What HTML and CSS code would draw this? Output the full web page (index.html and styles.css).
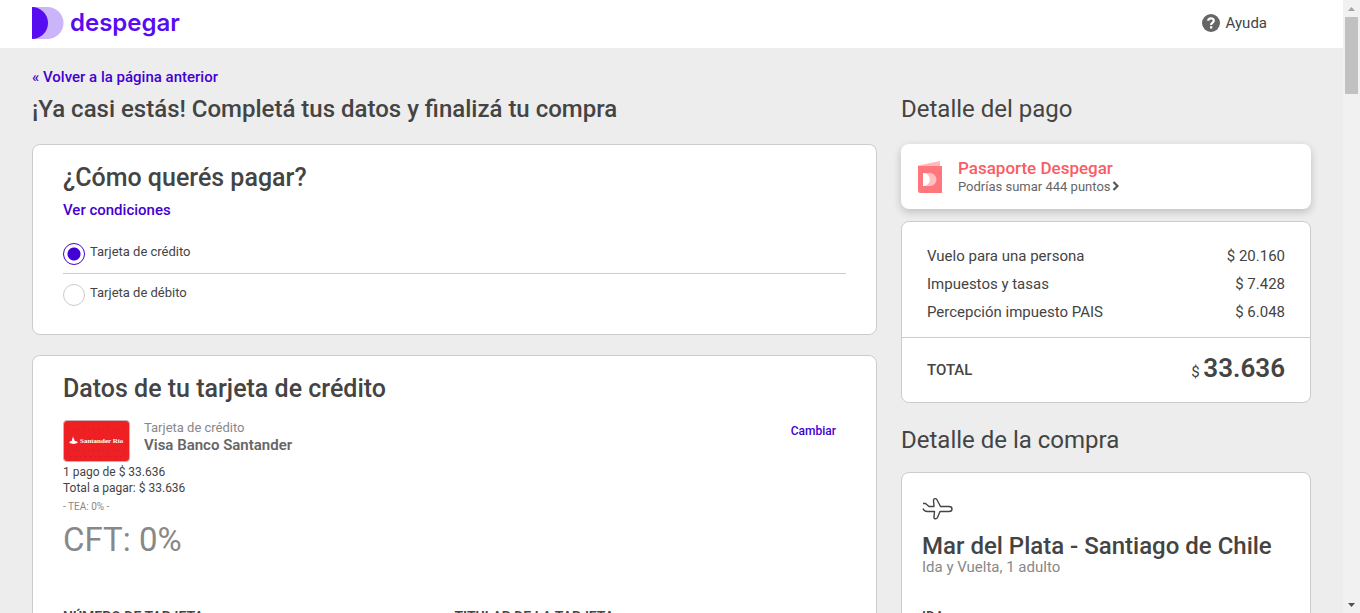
FILE: index.html
```html
<!DOCTYPE html>
<html lang="es">
<head>
<meta charset="utf-8">
<title>Despegar - Finalizá tu compra</title>
<link rel="stylesheet" href="styles.css">
</head>
<body>
<div class="page">
  <header class="header">
    <a class="brand" href="#">
      <svg class="brand-mark" width="32" height="32" viewBox="0 0 32 32" aria-hidden="true">
        <path fill="#cbb5fa" d="M0 0H15.500A16 16 0 0 1 15.500 32H0Z"/>
        <path fill="#570df0" d="M0 0A16 16 0 0 1 0 32Z"/>
      </svg>
      <span class="brand-name">despegar</span>
    </a>
    <a class="help" href="#">
      <svg width="18" height="18" viewBox="0 0 18 18" aria-hidden="true">
        <circle cx="9" cy="9" r="9" fill="#666"/>
        <path d="M6.200 6.800C6.300 3.400 11.900 3.600 11.800 6.700C11.700 8.700 9.100 8.500 9.100 11" fill="none" stroke="#fff" stroke-width="2.200"/>
        <rect x="8" y="12.200" width="2.300" height="2.300" fill="#fff"/>
      </svg>
      <span>Ayuda</span>
    </a>
  </header>
  <div class="layout">
    <main class="checkout">
      <a class="link back" href="#">« Volver a la página anterior</a>
      <h1 class="title">¡Ya casi estás! Completá tus datos y finalizá tu compra</h1>
      <section class="card payment">
        <h2 class="card-title">¿Cómo querés pagar?</h2>
        <a class="link conditions" href="#">Ver condiciones</a>
        <div class="options">
          <div class="option"><input class="radio" type="radio" name="method" id="credit" checked><label for="credit">Tarjeta de crédito</label></div>
          <div class="option"><input class="radio" type="radio" name="method" id="debit"><label for="debit">Tarjeta de débito</label></div>
        </div>
      </section>
      <section class="card card-data">
        <h2 class="card-title">Datos de tu tarjeta de crédito</h2>
        <div class="selected-card">
          <svg class="bank-logo" width="67" height="42" viewBox="0 0 67 42" role="img" aria-label="Santander Río">
            <rect x=".5" y=".5" width="66" height="41" rx="3.500" fill="#ee2024" stroke="#c9b5b5"/>
            <path d="M5 9.500H63M5 30.500H63M7 36.500H61" stroke="#c5183a" stroke-dasharray="1 4"/>
            <path d="M10.500 16C9.500 18 12 19.500 11.700 21C14 21 15 22 14.500 22.800C12.500 24.300 8.500 24.300 6.500 22.800C6 21.800 7.500 21 9 20.700C9 18.800 9.500 17.500 10.500 16Z" fill="#fff"/>
            <text class="bank-name" x="17" y="23">Santander Río</text>
          </svg>
          <div class="card-info">
            <p class="card-kind">Tarjeta de crédito</p>
            <p class="card-bank">Visa Banco Santander</p>
          </div>
          <a class="change" href="#">Cambiar</a>
        </div>
        <p class="amount">1 pago de $ 33.636</p>
        <p class="amount">Total a pagar: $ 33.636</p>
        <p class="tea">- TEA: 0% -</p>
        <p class="cft">CFT: 0%</p>
        <div class="fields">
          <div class="field"><label for="number">NÚMERO DE TARJETA</label><input class="text-input" id="number" type="text"></div>
          <div class="field"><label for="holder">TITULAR DE LA TARJETA</label><input class="text-input" id="holder" type="text"></div>
        </div>
      </section>
    </main>
    <aside class="summary">
      <h2 class="side-title">Detalle del pago</h2>
      <a class="passport" href="#">
        <svg width="24" height="32" viewBox="0 0 24 32" aria-hidden="true">
          <path fill="#ffb8bb" d="M0 4.500L22 0V6H0Z"/>
          <path fill="#ff777d" d="M0 5H24V32H2.500Q0 32 0 29.500Z"/>
          <path fill="#ffbfc2" d="M5 12H12A6.500 6.500 0 0 1 12 25H5Z"/>
          <path fill="#fff" d="M5 12C14 12 14 25 5 25Z"/>
        </svg>
        <span class="passport-text">
          <span class="passport-name">Pasaporte Despegar</span>
          <span class="passport-points">Podrías sumar 444 puntos<svg width="8" height="10" viewBox="0 0 8 10" aria-hidden="true"><path d="M2.500 1L6.500 5L2.500 9" fill="none" stroke="#555" stroke-width="2.200"/></svg></span>
        </span>
      </a>
      <div class="card prices">
        <table class="price-table">
          <tbody>
            <tr><th scope="row">Vuelo para una persona</th><td>$ 20.160</td></tr>
            <tr><th scope="row">Impuestos y tasas</th><td>$ 7.428</td></tr>
            <tr><th scope="row">Percepción impuesto PAIS</th><td>$ 6.048</td></tr>
          </tbody>
          <tfoot>
            <tr><th scope="row">TOTAL</th><td>$ <strong>33.636</strong></td></tr>
          </tfoot>
        </table>
      </div>
      <h2 class="side-title purchase-title">Detalle de la compra</h2>
      <section class="card trip">
        <svg class="plane" width="32" height="24" viewBox="0 0 32 24" aria-hidden="true">
          <path d="M1 6.500H3.500L7 9.500H12L11.500 3C11.500 1.500 14 1 14.800 2.500L18.500 9.500H27C31 9.500 31 14.500 27 14.500H18L15.500 20.500C14.500 22.500 11.500 22 12 20L12.500 14.500H5.500C3.500 14.500 1.500 13 1 11.500" fill="none" stroke="#444" stroke-width="1.400" stroke-linejoin="round"/>
        </svg>
        <h3 class="route">Mar del Plata - Santiago de Chile</h3>
        <p class="trip-kind">Ida y Vuelta, 1 adulto</p>
        <p class="leg">IDA</p>
      </section>
    </aside>
  </div>
</div>
<div class="scrollbar" aria-hidden="true">
  <svg width="17" height="17" viewBox="0 0 17 17"><path fill="#a3a3a3" d="M5 11L8.500 7L12 11Z"/></svg>
  <div class="thumb"></div>
  <svg class="arrow-down" width="17" height="17" viewBox="0 0 17 17"><path fill="#505050" d="M5 7H12L8.500 11Z"/></svg>
</div>
</body>
</html>
```
FILE: styles.css
```css
* { box-sizing: border-box; }
body {
  display: flex;
  height: 100vh;
  margin: 0;
  overflow: hidden;
  background: #ededed;
  color: #444;
  font-family: Roboto, "Open Sans", sans-serif;
  font-size: 14px;
}
h1, h2, h3, p { margin: 0; }
a { text-decoration: none; }
svg { flex: none; }
.page { flex: 1; min-width: 0; }
.header {
  display: flex;
  justify-content: space-between;
  align-items: center;
  height: 48px;
  padding: 0 76px 2px 32px;
  background: #fff;
}
.brand { display: flex; align-items: center; gap: 6px; color: #570df0; }
.brand-name { font: 600 24px/32px Inter, sans-serif; }
.help { display: flex; align-items: center; gap: 6px; color: #444; font-size: 15px; }
.layout {
  display: grid;
  grid-template-columns: minmax(0, 1fr) 410px;
  gap: 24px;
  padding: 19px 32px 0;
}
.link { display: block; color: #4300d2; font-size: 15px; font-weight: 500; line-height: 20px; }
.title { margin: 6px 0 19px; font-size: 24px; font-weight: 500; line-height: 32px; }
.card { background: #fff; border: 1px solid #ccc; border-radius: 8px; }
.card-title { font-size: 25px; font-weight: 500; line-height: 32px; }
.payment { padding: 17px 30px 28px; }
.conditions { margin: 6px 0 23px; }
.option { display: flex; gap: 5px; padding-bottom: 8px; font-size: 13px; line-height: 18px; }
.option + .option { padding: 10px 0 0; border-top: 1px solid #ccc; }
.radio {
  appearance: none;
  width: 22px;
  height: 22px;
  margin: 0;
  border: 1px solid #ccc;
  border-radius: 50%;
  background: #fff;
}
.radio:checked {
  border-color: #4300d2;
  background: radial-gradient(circle, #4300d2 6px, #fff 7px);
}
.card-data { margin-top: 20px; padding: 17px 30px 30px; }
.selected-card { display: flex; gap: 14px; margin: 15px 0 2px; }
.bank-name { fill: #fff; font: 700 7px "Liberation Serif", serif; }
.card-info { flex: 1; }
.card-kind { color: #888; font-size: 13px; line-height: 16px; }
.card-bank { color: #666; font-size: 15px; font-weight: 600; line-height: 18px; }
.change { padding-right: 10px; color: #4300d2; font-size: 12px; font-weight: 500; line-height: 22px; }
.amount { font-size: 12px; line-height: 16px; }
.tea { margin-top: 5px; color: #888; font-size: 10px; line-height: 12px; }
.cft { margin-top: 7px; color: #888; font-size: 33px; line-height: 40px; }
.fields { display: grid; grid-template-columns: 1fr 1fr; margin-top: 49px; }
.field { display: flex; flex-direction: column; gap: 8px; font-size: 14px; font-weight: 600; line-height: 16px; }
.text-input { width: 340px; height: 40px; border: 1px solid #ccc; border-radius: 4px; }
.summary { padding-top: 26px; }
.side-title { font-size: 24px; font-weight: 400; line-height: 32px; }
.passport {
  display: flex;
  gap: 16px;
  margin: 19px 0 12px;
  padding: 14px 17px 13px;
  border-radius: 8px;
  background: #fff;
  box-shadow: 0 3px 8px rgba(0, 0, 0, 0.2);
  align-items: center;
}
.passport-text { display: flex; flex-direction: column; }
.passport-name { color: #fa5c65; font-size: 17px; font-weight: 500; line-height: 20px; }
.passport-points { color: #666; font-size: 13px; line-height: 18px; }
.price-table { width: 100%; border-collapse: collapse; line-height: 28px; font-size: 15px; }
.price-table th { padding: 0 25px; text-align: left; font-weight: 400; }
.price-table td { padding: 0 25px; text-align: right; }
.price-table tbody tr:first-child > * { padding-top: 20px; }
.price-table tbody tr:last-child > * { padding-bottom: 11px; }
.price-table tfoot tr { height: 64px; border-top: 1px solid #ccc; }
.price-table tfoot th { font-weight: 500; }
.price-table strong { font-size: 26px; font-weight: 600; }
.purchase-title { margin: 21px 0 16px; }
.trip { padding: 24px 20px; }
.plane { display: block; }
.route { margin-top: 9px; font-size: 24px; font-weight: 500; line-height: 32px; }
.trip-kind { color: #888; font-size: 15px; line-height: 18px; margin-top: -4px; }
.leg { margin-top: 33px; font-size: 14px; font-weight: 500; line-height: 16px; }
.scrollbar { display: flex; flex-direction: column; flex: none; width: 17px; background: #f1f1f1; }
.thumb { height: 77px; margin: 0 2px; background: #c1c1c1; }
.arrow-down { margin-top: auto; }
```
